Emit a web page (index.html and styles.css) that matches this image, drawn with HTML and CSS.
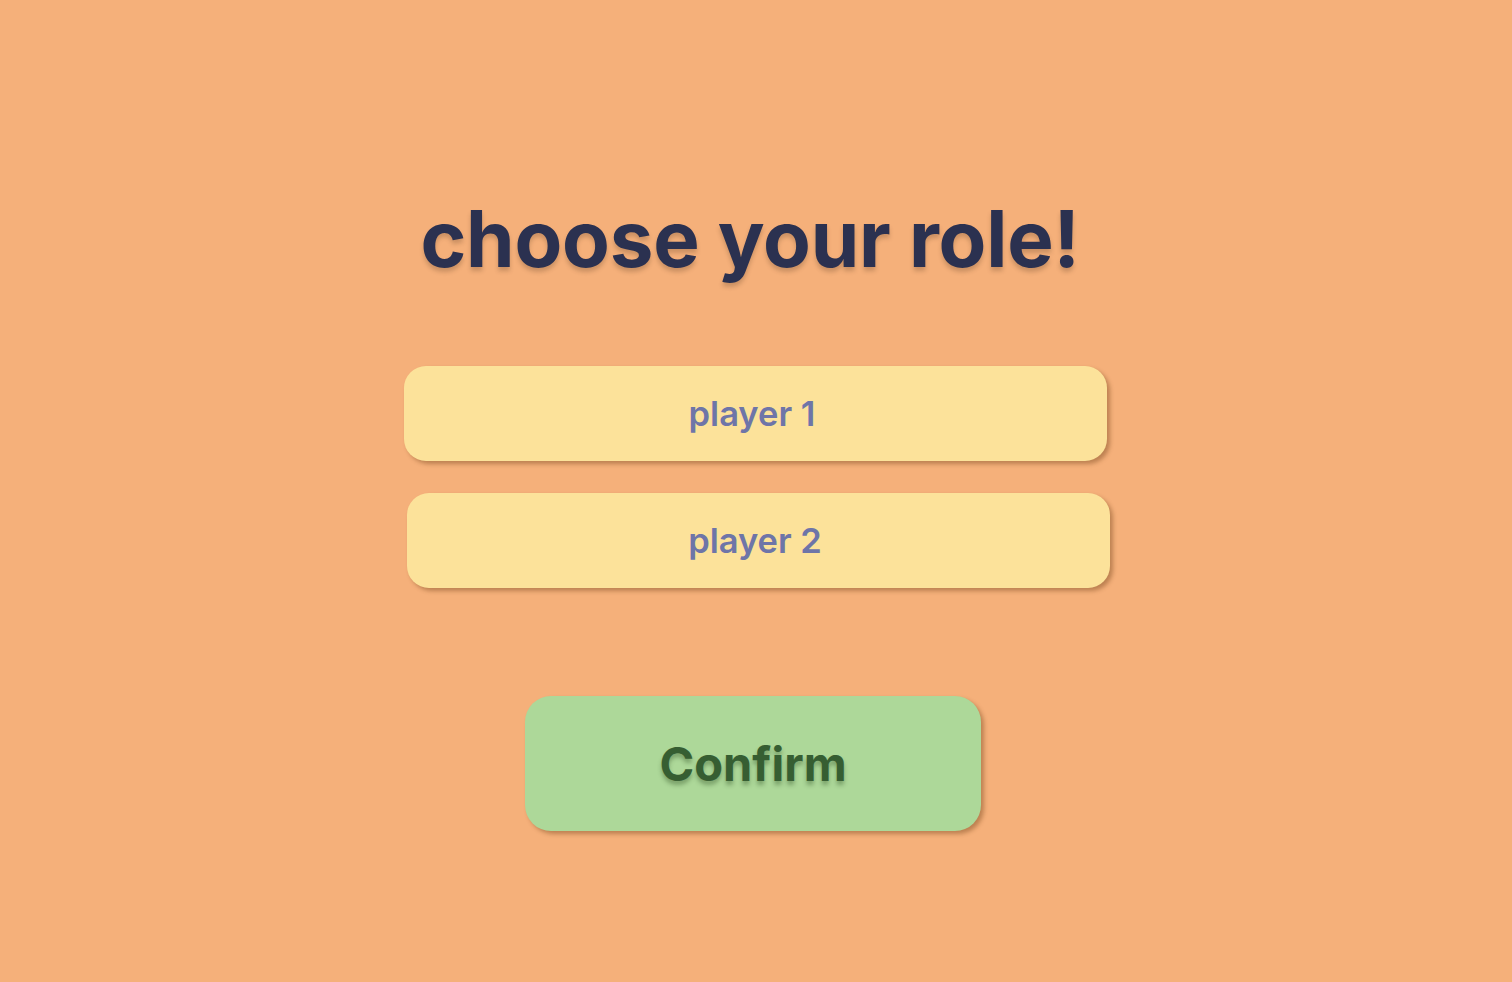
FILE: index.html
```html
<!DOCTYPE html>
<html lang="en">
<head>
<meta charset="utf-8">
<title>choose your role!</title>
<link rel="stylesheet" href="styles.css">
</head>
<body>
<main class="screen">
  <h1 class="title">choose your role!</h1>
  <div class="roles">
    <button class="role">player 1</button>
    <button class="role role-alt">player 2</button>
  </div>
  <button class="confirm">Confirm</button>
</main>
</body>
</html>
```
FILE: styles.css
```css
html, body {
  margin: 0;
  padding: 0;
  height: 100%;
}
body {
  background: #f5b07a;
  font-family: Inter, "Open Sans", sans-serif;
}
.screen {
  display: flex;
  flex-direction: column;
  align-items: center;
  padding-top: 200px;
}
.title {
  margin: 0 12px 0 0;
  font-size: 78px;
  line-height: 78px;
  font-weight: 700;
  color: #2b3150;
  letter-spacing: -0.2px;
  text-shadow: 0 4px 4px rgba(80, 50, 30, 0.25);
}
.roles {
  display: flex;
  flex-direction: column;
  align-items: center;
  gap: 32px;
  margin-top: 88px;
  margin-right: 2px;
}
.role {
  width: 703px;
  height: 95px;
  padding: 0 6px 0 0;
  border: none;
  border-radius: 22px;
  background: #fce29a;
  color: #6e75a8;
  font-family: inherit;
  font-size: 34.5px;
  font-weight: 600;
  box-shadow: 3px 3px 4px rgba(120, 70, 30, 0.45);
  cursor: pointer;
}
.role-alt {
  margin-left: 6px;
}
.confirm {
  margin-top: 108px;
  margin-right: 6px;
  width: 456px;
  height: 135px;
  border: none;
  border-radius: 26px;
  background: #add899;
  color: #365e32;
  font-family: inherit;
  font-size: 47px;
  font-weight: 700;
  text-shadow: 0 4px 4px rgba(30, 60, 20, 0.35);
  box-shadow: 3px 3px 4px rgba(120, 70, 30, 0.45);
  cursor: pointer;
}
```
